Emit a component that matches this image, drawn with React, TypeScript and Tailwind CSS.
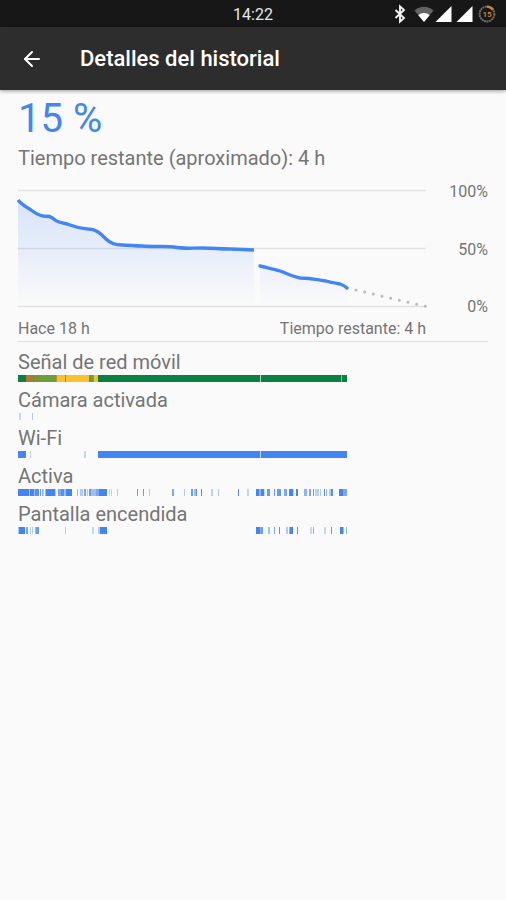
import React, { useId } from 'react';
import { ArrowLeft } from 'lucide-react';

// [start, width, opacity] on the 408 unit time axis
type Segment = [number, number, number];

interface Track {
  label: string;
  segments: Segment[];
}

const AXIS = 408;

const signalSegments: [number, number, string][] = [
  [0, 329, '#0b8043'],
  [8, 31, '#689f38'],
  [8, 1, '#a8782a'],
  [10, 1, '#c2702b'],
  [12, 2, '#c2702b'],
  [15, 1, '#a8782a'],
  [18, 2, '#c2702b'],
  [38, 42, '#fbc02d'],
  [38, 1, '#d08a2a'],
  [47, 1, '#c77c1e'],
  [71, 4, '#689f38'],
  [75, 1, '#d08a2a'],
  [242, 1, '#b5d6c4'],
  [323, 1, '#86bda0'],
];

const tracks: Track[] = [
  {
    label: 'Cámara activada',
    segments: [[1, 2, 0.3], [14, 1, 0.4]],
  },
  {
    label: 'Wi-Fi',
    segments: [[0, 8, 1], [12, 1, 0.35], [66, 2, 0.3], [80, 162, 1], [242, 1, 0.3], [243, 86, 1]],
  },
  {
    label: 'Activa',
    segments: [
      [0, 11, 1], [11, 1, 0.5], [12, 4, 1], [16, 1, 0.5], [17, 4, 0.9], [22, 1, 0.8], [24, 1, 0.6], [25, 1, 0.3],
      [27, 1, 0.5], [28, 9, 1], [37, 1, 0.4], [40, 3, 0.7], [43, 3, 0.9], [46, 2, 0.5], [48, 6, 1], [59, 1, 0.5],
      [62, 3, 0.4], [66, 2, 0.7], [69, 1, 0.4], [71, 2, 0.8], [73, 5, 0.5], [78, 3, 0.7], [81, 8, 1],
      [91, 1, 0.3], [93, 1, 0.3], [99, 1, 0.4],
      [119, 1, 0.8], [125, 1, 0.8], [131, 1, 0.4], [154, 2, 0.7], [166, 1, 0.4], [173, 2, 0.8], [176, 2, 0.5],
      [178, 1, 0.9], [183, 1, 0.9], [193, 2, 0.35], [200, 1, 0.4], [220, 1, 0.9], [229, 2, 0.3],
      [238, 3, 1], [241, 2, 0.6], [243, 3, 1], [246, 1, 0.3], [249, 3, 0.8], [256, 1, 0.8], [259, 4, 0.8],
      [266, 3, 0.7], [271, 4, 1], [275, 1, 0.4], [278, 2, 1], [286, 3, 0.6], [291, 2, 0.7], [295, 1, 0.8],
      [297, 4, 0.35], [302, 1, 0.4], [306, 1, 0.9], [308, 1, 0.5], [311, 2, 0.4], [313, 2, 0.9],
      [321, 4, 1], [325, 4, 0.7],
    ],
  },
  {
    label: 'Pantalla encendida',
    segments: [
      [0, 1, 0.4], [1, 6, 1], [8, 2, 0.7], [12, 1, 0.4], [14, 1, 0.4], [17, 1, 0.5], [18, 3, 0.8], [47, 1, 0.4],
      [74, 2, 0.3], [80, 2, 0.4], [82, 7, 1],
      [238, 4, 1], [242, 1, 0.6], [243, 2, 0.8], [250, 2, 0.5], [256, 1, 0.7], [261, 1, 0.9], [268, 2, 0.4],
      [271, 1, 0.6], [272, 3, 1], [279, 1, 0.9], [292, 2, 0.3], [295, 1, 0.6], [306, 2, 0.3], [313, 1, 0.8],
      [322, 3, 1], [325, 1, 0.5], [328, 1, 0.6],
    ],
  },
];

function StatusBar() {
  return (
    <div className="relative flex h-[27px] items-center justify-center bg-[#171717] pt-0.5 text-base leading-none text-gray-200">
      <span>14:22</span>
      <div className="absolute inset-y-0 right-2.5 flex items-center">
        <svg className="mr-2 h-5 w-3" viewBox="0 0 12 20" fill="none" stroke="#f2f2f2" strokeWidth="1.9">
          <path d="M1.5 6 L10 14 L6 17.6 V2.4 L10 6 L1.5 14" />
        </svg>
        <svg className="h-5 w-5" viewBox="0 0 20 20">
          <path d="M0.5 6.5 C6 1.6 14 1.6 19.5 6.5 L10 18 Z" fill="#636363" />
          <path d="M4.4 11.2 C7.5 8.4 12.5 8.4 15.6 11.2 L10 18 Z" fill="#fff" />
        </svg>
        <svg className="ml-px h-5 w-[17px]" viewBox="0 0 17 20">
          <path d="M0.5 18 H16.5 V2 Z" fill="#fff" />
        </svg>
        <svg className="ml-1 h-5 w-[17px]" viewBox="0 0 17 20">
          <path d="M0.5 18 H16.5 V2 Z" fill="#fff" />
        </svg>
        <svg className="ml-[5px] h-[18px] w-[18px]" viewBox="0 0 18 18">
          <circle cx="9" cy="9" r="7.4" fill="none" stroke="#6b6b6b" strokeWidth="2" strokeDasharray="2 0.5" />
          <path d="M9 1.6 A7.4 7.4 0 0 1 15 4.7" fill="none" stroke="#cf8427" strokeWidth="2.4" />
          <text x="9" y="12" textAnchor="middle" fontSize="8" fontWeight="500" fill="#e08a24">15</text>
        </svg>
      </div>
    </div>
  );
}

function BatteryChart() {
  const fill = useId();
  const past =
    'M0 10 C3 14 8 17 13 20 C17 23 20 25 25 26 C30 26 33 26 37 30 C41 33 47 33 52 35 C60 38 63 38 70 39 C78 39 82 43 88 49 C92 53 96 55 104 55 C112 55 116 56 124 56 C136 57 150 56 156 57 C165 59 172 58 184 58 C196 58 200 59 212 59 C224 59 226 60 236 60';
  const recent = 'M242 76 C250 78 256 79 262 81 C270 84 276 87 282 88 C294 88 300 90 308 91 C314 93 318 93 322 94 C325 95 327 96 329 98';

  return (
    <svg className="block h-auto w-full overflow-visible" viewBox={`0 0 ${AXIS} 117`} role="img" aria-label="Batería">
      <defs>
        <linearGradient id={fill} gradientUnits="userSpaceOnUse" x1="0" y1="0" x2="0" y2="116">
          <stop offset="0" stopColor="#4285f4" stopOpacity="0.2" />
          <stop offset="0.5" stopColor="#4285f4" stopOpacity="0.11" />
          <stop offset="1" stopColor="#4285f4" stopOpacity="0" />
        </linearGradient>
      </defs>
      <path d="M0 0.5 H408 M0 58.5 H408 M0 116.5 H408" stroke="#e2e2e2" strokeWidth="1.4" />
      <path d={`${past} V116 H0 Z`} fill={`url(#${fill})`} />
      <path d={`${recent} V116 H242 Z`} fill={`url(#${fill})`} />
      <path d={past} fill="none" stroke="#4285f4" strokeWidth="3.4" />
      <path d={recent} fill="none" stroke="#4285f4" strokeWidth="3.4" strokeLinecap="round" />
      <path d="M338 100 L408 116.5" fill="none" stroke="#b8bcbc" strokeWidth="3" strokeLinecap="round" strokeDasharray="0 8.9" />
    </svg>
  );
}

function TrackRow({ label, children }: { label: string; children: React.ReactNode }) {
  return (
    <li className="h-[38px]">
      <h3 className="text-xl leading-6">{label}</h3>
      <div className="pr-[62px]">
        <svg className="mt-px block h-[7px] w-full" viewBox={`0 0 ${AXIS} 7`} preserveAspectRatio="none" aria-hidden="true">
          {children}
        </svg>
      </div>
    </li>
  );
}

function App() {
  return (
    <div className="min-h-screen bg-[#fafafa] font-['Roboto',sans-serif] text-[#757575]">
      <StatusBar />
      <header className="relative flex h-[63px] items-center bg-[#2d2d2d] px-5 text-white shadow-[0_1px_4px_rgba(0,0,0,0.4)]">
        <button type="button" aria-label="Atrás" className="mr-9">
          <ArrowLeft className="h-6 w-6" />
        </button>
        <h1 className="text-[22px] font-medium leading-7">Detalles del historial</h1>
      </header>

      <main className="px-[18px] pt-1">
        <p className="text-[40px] leading-[50px] text-[#4285f4]">15 %</p>
        <h2 className="text-xl leading-7">Tiempo restante (aproximado): 4 h</h2>

        <section className="border-b border-[#e0e0e0] pt-[18px]">
          <div className="flex">
            <div className="min-w-0 flex-1">
              <BatteryChart />
            </div>
            <div className="-mb-2.5 -mt-2 flex w-[62px] shrink-0 flex-col items-end justify-between text-base leading-5">
              <span>100%</span>
              <span>50%</span>
              <span>0%</span>
            </div>
          </div>
          <div className="flex justify-between pb-0.5 pr-[62px] pt-3 text-base leading-5">
            <span>Hace 18 h</span>
            <span>Tiempo restante: 4 h</span>
          </div>
        </section>

        <ul className="pt-2">
          <TrackRow label="Señal de red móvil">
            {signalSegments.map(([x, width, color], i) => (
              <rect key={i} x={x} y="0" width={width} height="7" fill={color} />
            ))}
          </TrackRow>
          {tracks.map(track => (
            <TrackRow key={track.label} label={track.label}>
              {track.segments.map(([x, width, opacity]) => (
                <rect key={x} x={x} y="0" width={width} height="7" fill="#4285f4" opacity={opacity} />
              ))}
            </TrackRow>
          ))}
        </ul>
      </main>
    </div>
  );
}

export default App;
